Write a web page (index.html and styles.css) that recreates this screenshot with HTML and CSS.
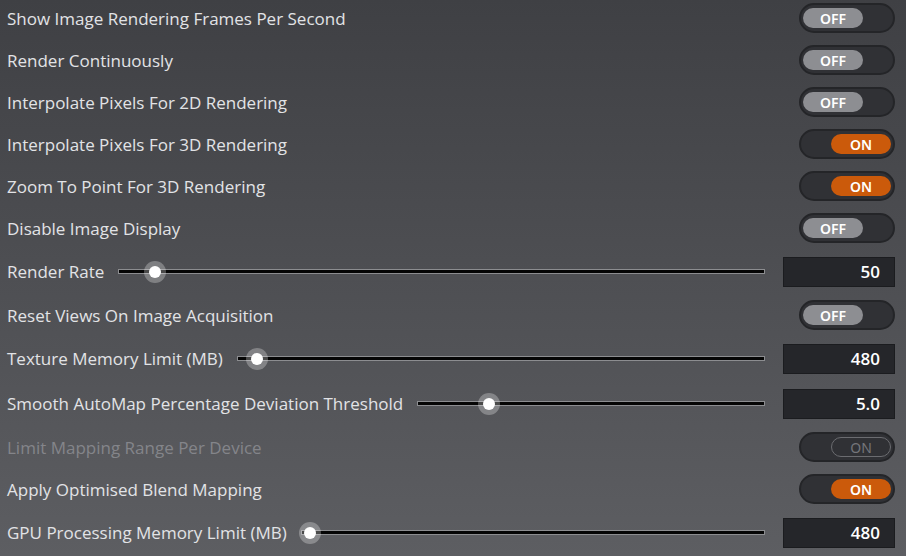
FILE: index.html
```html
<!DOCTYPE html>
<html>
<head>
<meta charset="utf-8">
<link rel="stylesheet" href="styles.css">
</head>
<body>
<div class="list">
  <div class="row"><span class="label">Show Image Rendering Frames Per Second</span><span class="toggle"><span class="pill off">OFF</span></span></div>
  <div class="row"><span class="label">Render Continuously</span><span class="toggle"><span class="pill off">OFF</span></span></div>
  <div class="row"><span class="label">Interpolate Pixels For 2D Rendering</span><span class="toggle"><span class="pill off">OFF</span></span></div>
  <div class="row"><span class="label">Interpolate Pixels For 3D Rendering</span><span class="toggle on"><span class="pill on">ON</span></span></div>
  <div class="row"><span class="label">Zoom To Point For 3D Rendering</span><span class="toggle on"><span class="pill on">ON</span></span></div>
  <div class="row"><span class="label">Disable Image Display</span><span class="toggle"><span class="pill off">OFF</span></span></div>
  <div class="row slider-row"><span class="label">Render Rate</span><div class="slider"><div class="track"></div><span class="thumb" style="left: 5.7%"></span></div><span class="value">50</span></div>
  <div class="row"><span class="label">Reset Views On Image Acquisition</span><span class="toggle"><span class="pill off">OFF</span></span></div>
  <div class="row slider-row"><span class="label">Texture Memory Limit (MB)</span><div class="slider"><div class="track"></div><span class="thumb" style="left: 3.8%"></span></div><span class="value">480</span></div>
  <div class="row slider-row"><span class="label">Smooth AutoMap Percentage Deviation Threshold</span><div class="slider"><div class="track"></div><span class="thumb" style="left: 20.7%"></span></div><span class="value">5.0</span></div>
  <div class="row disabled"><span class="label">Limit Mapping Range Per Device</span><span class="toggle on"><span class="pill dis">ON</span></span></div>
  <div class="row"><span class="label">Apply Optimised Blend Mapping</span><span class="toggle on"><span class="pill on">ON</span></span></div>
  <div class="row slider-row"><span class="label">GPU Processing Memory Limit (MB)</span><div class="slider"><div class="track"></div><span class="thumb" style="left: 2%"></span></div><span class="value">480</span></div>
</div>
</body>
</html>
```
FILE: styles.css
```css
html, body {
  margin: 0;
  padding: 0;
  height: 100%;
}
body {
  background: linear-gradient(to bottom, #3f4044 0%, #5d5e62 100%);
  font-family: "Open Sans", "Noto Sans", sans-serif;
  color: #e2e3e6;
  overflow: hidden;
}
.list {
  margin-top: -3px;
  padding: 0 11px 0 7px;
  display: flex;
  flex-direction: column;
}
.row {
  height: 42px;
  display: flex;
  align-items: center;
}
.slider-row {
  height: 45px;
}
.label {
  font-size: 17px;
  white-space: nowrap;
  flex: 0 0 auto;
}
.row:not(.slider-row) .label {
  flex: 1 1 auto;
}
.disabled .label {
  color: #84858a;
}
.toggle {
  box-sizing: border-box;
  width: 96px;
  height: 30px;
  border-radius: 15px;
  background: #303135;
  border: 2px solid #242528;
  display: flex;
  align-items: center;
  padding: 0 2px;
}
.toggle.on {
  justify-content: flex-end;
}
.pill {
  width: 60px;
  height: 20px;
  border-radius: 10px;
  box-sizing: border-box;
  display: flex;
  align-items: center;
  justify-content: center;
  font-size: 14px;
  font-weight: 600;
  color: #ffffff;
  font-family: "Noto Sans", "Open Sans", sans-serif;
}
.pill.off {
  background: #8d8e92;
}
.pill.on {
  background: #cb5a0b;
}
.pill.dis {
  background: transparent;
  border: 1.5px solid #6b6c70;
  color: #74757a;
  font-weight: 400;
}
.slider {
  flex: 1 1 auto;
  position: relative;
  height: 24px;
  margin: 0 18px 0 14px;
  display: flex;
  align-items: center;
}
.track {
  width: 100%;
  height: 5px;
  box-sizing: border-box;
  background: #050505;
  border: 1px solid #8c8d90;
}
.thumb {
  position: absolute;
  top: 50%;
  width: 12px;
  height: 12px;
  margin: -6px 0 0 -6px;
  border-radius: 50%;
  background: #ffffff;
  box-shadow: 0 0 0 5px rgba(255, 255, 255, 0.28);
}
.value {
  box-sizing: border-box;
  width: 112px;
  height: 30px;
  background: #25262a;
  border: 1px solid #1b1c1f;
  color: #ffffff;
  font-size: 17px;
  font-weight: 600;
  text-align: right;
  padding-right: 14px;
  line-height: 28px;
}
```
